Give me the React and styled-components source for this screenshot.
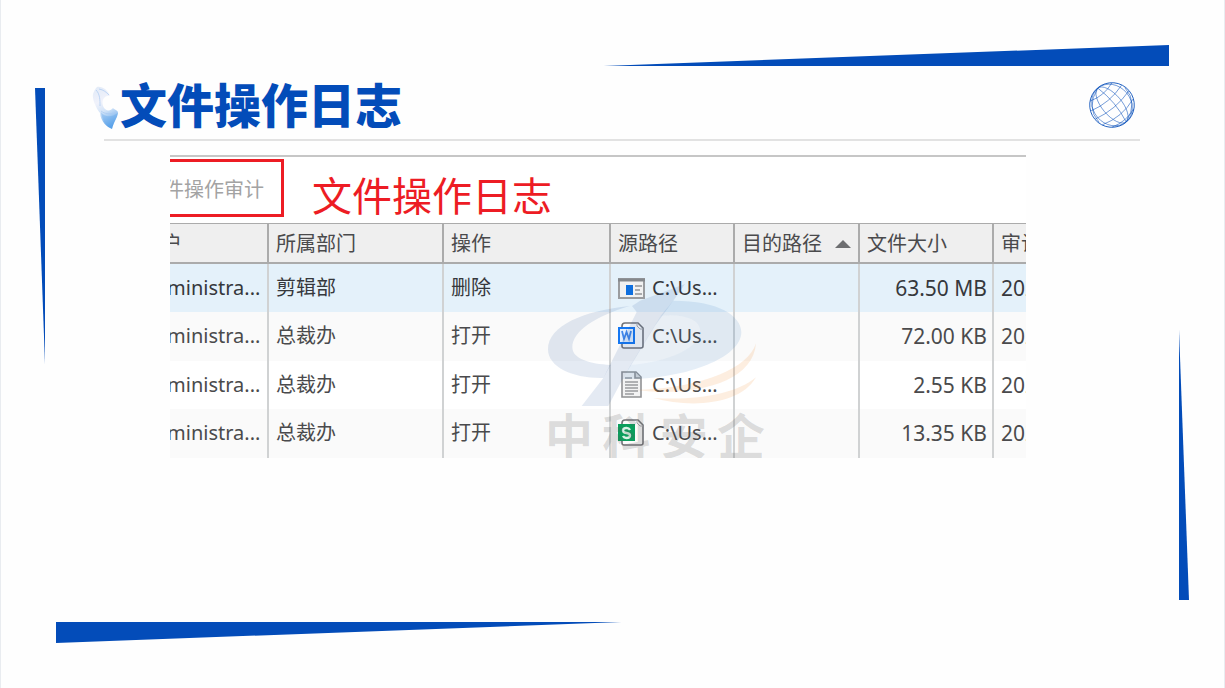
import styled, { createGlobalStyle } from "styled-components";

const blue = "#034cb9";

const columns = [
  { label: "用户", width: 134 },
  { label: "所属部门", width: 175 },
  { label: "操作", width: 167 },
  { label: "源路径", width: 124 },
  { label: "目的路径", width: 125, sorted: true },
  { label: "文件大小", width: 134 },
  { label: "审计时间" },
];

const logs = [
  { dept: "剪辑部", action: "删除", icon: "app", size: "63.50 MB" },
  { dept: "总裁办", action: "打开", icon: "word", size: "72.00 KB" },
  { dept: "总裁办", action: "打开", icon: "text", size: "2.55 KB" },
  { dept: "总裁办", action: "打开", icon: "sheet", size: "13.35 KB" },
];

const FileIcon = ({ type }) => {
  if (type === "app") {
    return (
      <svg width="28" height="28" viewBox="0 0 28 28">
        <rect x="2" y="5" width="25" height="19" fill="#f1f1f1" stroke="#9a9c9f" strokeWidth="2" />
        <path d="M1 6h27" stroke="#85888c" strokeWidth="3" />
        <rect x="9" y="11" width="7" height="10" fill="#0f6fde" />
        <path d="M18 12h7M18 16h5M18 20h7" stroke="#929497" strokeWidth="1.4" />
      </svg>
    );
  }
  if (type === "text") {
    return (
      <svg width="28" height="28" viewBox="0 0 28 28">
        <path d="M5 1h14l5 5v20H5z" fill="#f3f3f3" stroke="#919294" strokeWidth="1.6" />
        <path d="M18 1v6h6" fill="#d9d9d9" stroke="#919294" strokeWidth="1.6" />
        <path d="M8 7h7M8 11h13M8 14h13M8 17h13M8 20h13M8 23h9" stroke="#9b9c9e" strokeWidth="1.3" />
      </svg>
    );
  }
  const word = type === "word";
  return (
    <svg width="28" height="28" viewBox="0 0 28 28">
      <path d="M5 4q0-3 3-3h13l5 5v18q0 2-2 2H7q-2 0-2-2z" fill="#fbfbfb" stroke="#737478" strokeWidth="1.6" />
      <path d="M20 1v3l3 3h3" fill="none" stroke="#a7a8ab" />
      <rect
        x="2"
        y="6"
        width="15"
        height="15"
        fill={word ? "#e2efff" : "#0a9e5c"}
        stroke={word ? "#1477f2" : "#0a9e5c"}
        strokeWidth="2"
      />
      {word ? (
        <path d="M5 9l2 8 2.500-7 2.500 7 2-8" fill="none" stroke="#3f86ea" strokeWidth="1.8" />
      ) : (
        <path
          d="M13 11q-1-2-3.500-2Q6 9 6 11.500q0 2 3.500 2.500 3.500.5 3.500 2.500 0 2.500-3.500 2.500Q7 19 6 17"
          fill="none"
          stroke="#d9f3e6"
          strokeWidth="2.4"
        />
      )}
    </svg>
  );
};

const Feather = () => (
  <svg width="28" height="46" viewBox="0 0 28 46" aria-hidden="true">
    <defs>
      <linearGradient id="wing" x1="0.2" y1="0" x2="0.5" y2="1">
        <stop offset="0" stopColor="#e3ebf8" />
        <stop offset="0.35" stopColor="#f0f2fb" />
        <stop offset="0.6" stopColor="#d3e4f8" />
        <stop offset="1" stopColor="#5ba3ea" />
      </linearGradient>
    </defs>
    <path
      d="M5 1C10 0 16 4 18 10C13 9 9 14 11 20C13 25 18 26 21 22C23 24 26 24 26 27C25 33 22 35 20 43C15 41 9 36 8 27C4 22 0 13 1 8C2 5 3 3 5 1Z"
      fill="url(#wing)"
    />
    <path d="M9 26C13 32 20 31 26 27C24 33 22 35 20 43C14 40 10 34 9 26Z" fill="#5ba3ea" opacity="0.35" />
    <path d="M4 4C8 8 8 14 8 20M7 3C12 4 14 6 17 9M9 25C13 28 18 29 25 26" fill="none" stroke="#a9c9f0" strokeWidth="0.7" />
  </svg>
);

const Globe = () => (
  <svg width="46" height="46" viewBox="0 0 46 46" aria-hidden="true">
    <g fill="none" stroke={blue} strokeWidth="0.5" transform="rotate(-40 23 23)">
      <circle cx="23" cy="23" r="22.300" strokeWidth="0.8" />
      <ellipse cx="23" cy="23" rx="19" ry="22" />
      <ellipse cx="23" cy="23" rx="10" ry="22" />
      <path d="M23 1Q28 23 23 45" />
      <path d="M1 23Q23 29 45 23M3 14Q23 20 43 14M3 32Q23 39 43 32M9 6Q23 11 37 6M9 40Q23 45 37 40" />
      <path d="M23 1Q1 8 2 28M23 45Q45 38 44 18" />
    </g>
  </svg>
);

const App = () => {
  return (
    <Slide>
      <GlobalStyle />
      <TopWedge />
      <Middle>
        <LeftWedge />
        <Content>
          <TitleBar>
            <Feather />
            <h1>文件操作日志</h1>
            <Globe />
          </TitleBar>
          <Rule />
          <LogPanel>
            <PanelHead>
              <Tab type="button">
                <span>文件操作审计</span>
              </Tab>
              <h2>文件操作日志</h2>
            </PanelHead>
            <LogTable>
              <colgroup>
                {columns.map((col) => (
                  <Col key={col.label} $width={col.width} />
                ))}
              </colgroup>
              <thead>
                <tr>
                  {columns.map((col) => (
                    <HeadCell key={col.label} scope="col">
                      <HeadLabel>
                        {col.label}
                        {col.sorted && <SortMark />}
                      </HeadLabel>
                    </HeadCell>
                  ))}
                </tr>
              </thead>
              <tbody>
                {logs.map((log, i) => (
                  <Row key={log.icon} $selected={i === 0}>
                    <Cell>Administra...</Cell>
                    <Cell>{log.dept}</Cell>
                    <Cell>{log.action}</Cell>
                    <Cell>
                      <FilePath>
                        <FileIcon type={log.icon} />
                        C:\Us...
                      </FilePath>
                    </Cell>
                    <Cell />
                    <NumberCell $right>{log.size}</NumberCell>
                    <NumberCell>2024</NumberCell>
                  </Row>
                ))}
              </tbody>
            </LogTable>
            <Watermark>
              <svg width="230" height="124" viewBox="0 0 690 372">
                <path
                  d="M270 66C130 80 24 125 24 196C24 250 100 284 190 282L212 243C150 240 97 225 97 190C97 140 170 95 270 66Z"
                  fill="#24509a"
                  opacity="0.12"
                />
                <path d="M435 0L400 50L345 125L248 285L205 366H125L190 282L290 84L276 66L300 50Z" fill="#24509a" opacity="0.12" />
                <path
                  d="M400 50C535 50 604 95 604 145C604 220 440 288 248 285L272 243C390 235 490 185 480 135C475 105 430 88 362 95Z"
                  fill="#2b75bd"
                  opacity="0.12"
                />
                <path d="M362 95C430 88 475 105 480 135C490 185 390 235 272 243Z" fill="#2b75bd" opacity="0.08" />
                <path
                  d="M648 178C625 250 500 310 290 318C450 340 640 300 648 178ZM648 280C590 330 470 350 340 342C450 372 600 365 648 280Z"
                  fill="#f08c32"
                  opacity="0.15"
                />
              </svg>
              <Brand>
                {[..."中科安企"].map((char) => (
                  <span key={char}>{char}</span>
                ))}
              </Brand>
            </Watermark>
          </LogPanel>
        </Content>
        <RightWedge />
      </Middle>
      <BottomWedge />
    </Slide>
  );
};

const GlobalStyle = createGlobalStyle`
  * {
    box-sizing: border-box;
  }

  body {
    margin: 0;
    background: #fefefe;
    font-family: "Noto Sans", "Noto Sans CJK SC", sans-serif;
  }
`;

const Slide = styled.main`
  display: flex;
  flex-direction: column;
  min-height: 100vh;
  padding: 45px 35px 45px 34px;
  border: solid #e9ecf0;
  border-width: 0 1px;
`;

const Wedge = styled.div`
  background: ${blue};
`;

const TopWedge = styled(Wedge)`
  width: 49%;
  height: 21px;
  margin-right: 20px;
  align-self: flex-end;
  clip-path: polygon(0 100%, 100% 0, 100% 100%);
`;

const BottomWedge = styled(Wedge)`
  width: 49%;
  height: 21px;
  margin-left: 21px;
  clip-path: polygon(0 0, 100% 0, 0 100%);
`;

const Middle = styled.div`
  display: flex;
  flex: 1;
`;

const LeftWedge = styled(Wedge)`
  width: 10px;
  height: 276px;
  margin-top: 22px;
  clip-path: polygon(0 0, 100% 0, 100% 100%);
`;

const RightWedge = styled(Wedge)`
  width: 10px;
  height: 270px;
  margin-bottom: 22px;
  align-self: flex-end;
  clip-path: polygon(0 0, 100% 100%, 0 100%);
`;

const Content = styled.section`
  flex: 1;
  min-width: 0;
  padding: 12px 39px 0 47px;
`;

const TitleBar = styled.header`
  display: flex;
  align-items: center;
  height: 54px;
  padding-right: 5px;

  svg:first-child {
    align-self: flex-end;
  }

  h1 {
    flex: 1;
    margin: 0;
    padding-bottom: 4px;
    color: ${blue};
    font-family: "Noto Sans CJK SC", sans-serif;
    font-size: 47px;
    font-weight: 900;
    line-height: 56px;
  }
`;

const Rule = styled.hr`
  height: 2px;
  margin: 7px 0 0 12px;
  border: 0;
  background: #e2e2e2;
`;

const LogPanel = styled.div`
  position: relative;
  overflow: hidden;
  margin: 14px 114px 0 78px;
  border-top: 2px solid #c6c6c6;
  background: #fff;
`;

const PanelHead = styled.div`
  display: flex;
  align-items: flex-start;
  gap: 28px;
  height: 66px;
  padding-top: 2px;

  h2 {
    margin: 9px 0 0;
    color: #ed1c24;
    font-size: 40px;
    font-weight: 400;
    line-height: 56px;
  }
`;

const Tab = styled.button`
  display: flex;
  justify-content: flex-end;
  align-items: center;
  width: 114px;
  height: 58px;
  padding: 0 17px 0 0;
  overflow: hidden;
  border: 3px solid #ed1c24;
  border-left: 0;
  background: #fff;
  color: #a3a3a3;
  font-family: inherit;
  font-size: 20px;
  white-space: nowrap;
`;

const LogTable = styled.table`
  width: calc(100% + 100px);
  margin-left: -35px;
  border-collapse: separate;
  border-spacing: 0;
  table-layout: fixed;
  color: #4a4a4c;
  font-size: 20px;
`;

const Col = styled.col`
  width: ${({ $width }) => ($width ? `${$width}px` : "auto")};
`;

const HeadCell = styled.th`
  height: 41px;
  padding: 2px 7px 0;
  border: solid #ababab;
  border-width: 1px 2px 2px 0;
  background: #efefef;
  font-weight: 400;
  text-align: left;
  white-space: nowrap;
`;

const HeadLabel = styled.div`
  display: flex;
  justify-content: space-between;
  align-items: center;
  line-height: 24px;
`;

const SortMark = styled.span`
  border: solid transparent;
  border-width: 0 8px 8px;
  border-bottom-color: #6d6e70;
`;

const Row = styled.tr`
  height: 48px;
  background: ${({ $selected }) => ($selected ? "#e4f1fa" : "#fff")};
  color: ${({ $selected }) => ($selected ? "#36383c" : "inherit")};

  &:nth-child(even) {
    height: 49px;
    background: #fafafa;
  }
`;

const Cell = styled.td`
  padding: 0 5px 1px 7px;
  border-right: 2px solid #d0d2d3;
  line-height: 28px;
  text-align: ${({ $right }) => ($right ? "right" : "left")};
  white-space: nowrap;
`;

const NumberCell = styled(Cell)`
  font-size: 21px;
`;

const FilePath = styled.div`
  display: flex;
  align-items: center;
  gap: 7px;
  margin-left: -1px;
`;

const Watermark = styled.div`
  position: absolute;
  right: 256px;
  bottom: 0;
  display: flex;
  flex-direction: column;
  align-items: center;
  width: 230px;
  pointer-events: none;
`;

const Brand = styled.div`
  display: flex;
  justify-content: space-between;
  width: 220px;
  color: rgba(90, 90, 90, 0.2);
  font-family: "Noto Sans CJK SC", sans-serif;
  font-size: 48px;
  font-weight: 700;
  line-height: 50px;
`;

export default App;
